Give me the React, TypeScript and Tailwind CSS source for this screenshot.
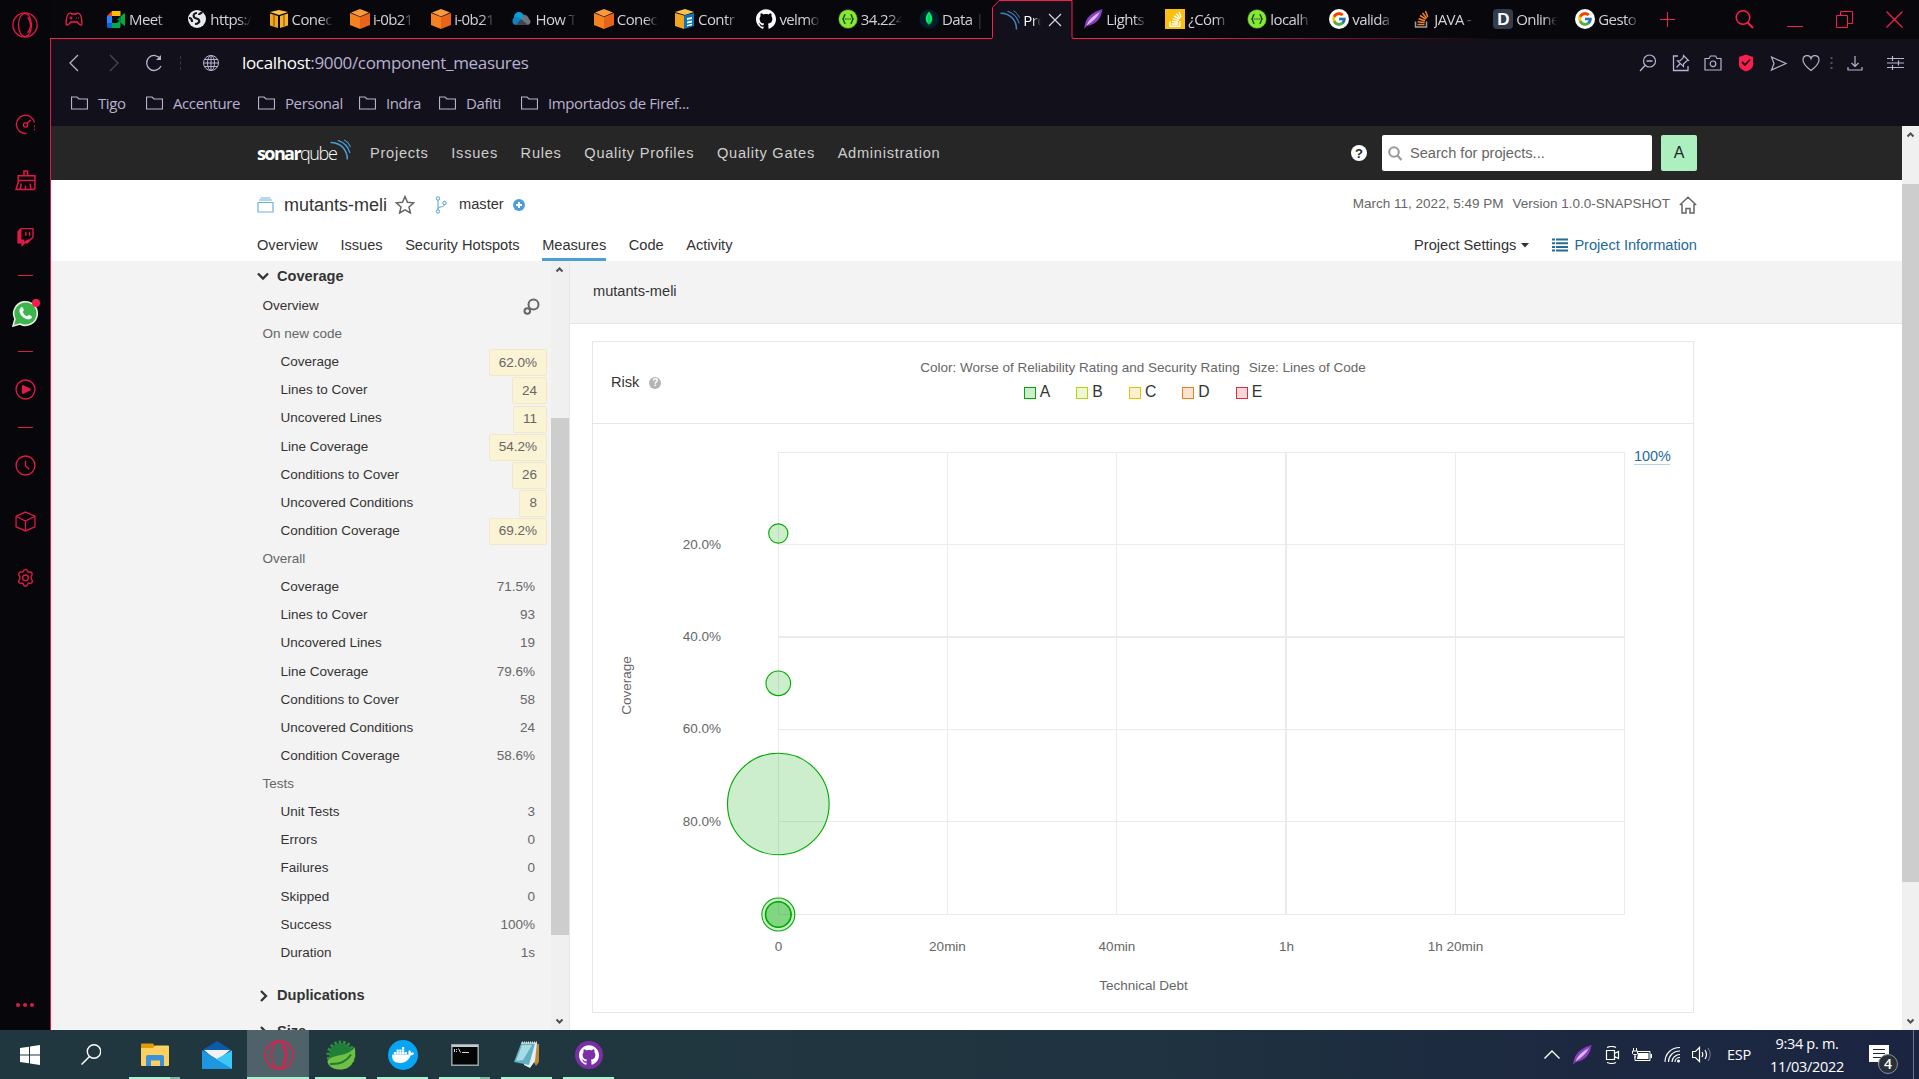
import React from "react";
import { SiTwitch, SiDocker, SiGithub } from "react-icons/si";
import { FcGoogle } from "react-icons/fc";

type Kids = { children?: React.ReactNode };

const UI = "font-['Open_Sans','Noto_Sans',sans-serif]";

function Svg({ w, h, vb, className = "", children }: Kids & { w: number; h: number; vb?: string; className?: string }) {
  return (
    <svg
      width={w}
      height={h}
      viewBox={vb ?? `0 0 ${w} ${h}`}
      fill="none"
      stroke="currentColor"
      className={`block shrink-0 ${className}`}
    >
      {children}
    </svg>
  );
}

/* ---------- favicons ---------- */

const Meet = () => (
  <Svg w={20} h={20}>
    <g stroke="none">
      <path d="M1 7l5-5v5z" fill="#ea4335" />
      <path d="M6 2h8.5v5H6z" fill="#fbbc04" />
      <path d="M1 7h5v7H1z" fill="#2684fc" />
      <path d="M1 14h5v5H2.5A1.5 1.5 0 0 1 1 17.500z" fill="#0066da" />
      <path d="M6 14h5l3.500-3v6.500a1.500 1.500 0 0 1-1.500 1.500H6z" fill="#00ac47" />
      <path d="M11 10.500l3.500-3v6z" fill="#00832d" />
      <path d="M14.500 7.500L18 4.500q1-.5 1 .5v11q0 1-1 .4l-3.500-3z" fill="#00ac47" />
    </g>
  </Svg>
);
const Globe = () => (
  <Svg w={20} h={20}>
    <circle cx="10" cy="10" r="9" fill="#e8eaed" stroke="none" />
    <path d="M10 4c-3 0-4 2-3 4s4 1 5 3-1 4-4 4M15 3c-1 2-3 1-3 3M2 9c2 0 3 2 3 4" stroke="#16151c" strokeWidth="2.200" />
  </Svg>
);
const YellowCube = () => (
  <Svg w={20} h={20}>
    <g stroke="none">
      <path d="M1 3l9-2 9 2-9 3z" fill="#fbc34a" />
      <path d="M1 4.500l8 2.500v12l-8-2.500z" fill="#f2a51e" />
      <path d="M19 4.500L11 7v12l8-2.500z" fill="#f6b02c" />
      <path d="M5 6v11M15 6v11" stroke="#7a4e06" strokeWidth="1" />
    </g>
  </Svg>
);
const OrangeCube = () => (
  <Svg w={20} h={20}>
    <g stroke="none">
      <path d="M10 0l9 3.500L10 7.500 1 3.500z" fill="#fb9a3c" />
      <path d="M0 4l10 4v12L0 16z" fill="#f58220" />
      <path d="M20 4L10 8v12l10-4z" fill="#e8641b" />
    </g>
  </Svg>
);
const CloudIcon = () => (
  <Svg w={20} h={20}>
    <g stroke="none">
      <circle cx="7" cy="8" r="5" fill="#0b9ddb" />
      <circle cx="4.500" cy="12" r="4" fill="#0b84c4" />
      <path d="M11 6a5 5 0 0 1 6 4 3.300 3.300 0 0 1-1 6H8z" fill="#6b7580" />
      <path d="M4 16h12l-7-6z" fill="#3c4650" />
    </g>
  </Svg>
);
const Console = () => (
  <Svg w={20} h={20}>
    <g stroke="none">
      <path d="M0 3l10-3 9 3-9 3z" fill="#fbc34a" />
      <path d="M0 4l9 2.500V20l-9-3z" fill="#f2a51e" />
      <path d="M9 6.500L19 4v13l-10 3z" fill="#0a75b8" />
      <path d="M12 9l5-1v2l-5 1zM12 12.500l5-1v2l-5 1zM12 16l5-1.200v1.500L12 17.500z" fill="#fff" />
    </g>
  </Svg>
);
const Swagger = () => (
  <Svg w={20} h={20}>
    <circle cx="10" cy="10" r="9.500" fill="#85ea2d" stroke="#173647" strokeWidth=".6" />
    <path d="M7.500 5.500C5 5.500 7 9.500 4.500 10 7 10.500 5 14.500 7.500 14.500M12.500 5.500c2.500 0 .5 4 3 4.500-2.500.5-.5 4.500-3 4.500" stroke="#173647" strokeWidth="1.300" />
    <path d="M7.300 10h1M9.500 10h1M11.700 10h1" stroke="#173647" strokeWidth="1.300" />
  </Svg>
);
const Mongo = () => (
  <Svg w={20} h={20}>
    <circle cx="10" cy="10" r="9.700" fill="#001e2b" stroke="none" />
    <path d="M10 2.500c2 2.500 3.300 4.500 3.300 7.200 0 2.800-1.600 4.600-3 5.600L10 17.500l-.3-2.200c-1.400-1-3-2.800-3-5.600C6.700 7 8 5 10 2.500z" fill="#00ed64" stroke="none" />
    <path d="M10 6v9" stroke="#00a84a" strokeWidth=".8" />
  </Svg>
);
const Waves = ({ w = 20, color = "#3f86bd" }: { w?: number; color?: string }) => (
  <Svg w={w} h={w} vb="0 0 20 20">
    <g stroke={color}>
      <path d="M.5 3.300C10 3.300 16.500 10 16.500 19.500" strokeWidth="1.500" />
      <path d="M7.500 1.300c5.500 1.700 10 6.500 11.500 12" strokeWidth="1.200" />
      <path d="M13.500.8c2.800 1.600 5 4.200 6 7" strokeWidth="1" />
    </g>
  </Svg>
);
const Feather = () => (
  <Svg w={20} h={20}>
    <path d="M19.500 0C12 2 4 7 2.500 13.500L1 19.500l3-2.500C13 15.500 18 10 19.500 0z" fill="#8b3fc0" stroke="none" />
    <path d="M17 3C11 6 6 10 3.500 16.500 9 13 14 9 17 3z" fill="#d9b8ee" stroke="none" />
  </Svg>
);
const Stack = ({ fg, base }: { fg: string; base: string }) => (
  <g strokeWidth="1.500">
    <path d="M4.500 12.500V18h11v-5.500" stroke={base} />
    <path d="M6.500 15.500h7M6.700 12.700l6.900.9M7.500 9.700l6.500 2.100M9 6.500l5.700 3.700M11.500 4l4.200 5.200M14.500 2l2.300 6" stroke={fg} />
  </g>
);
const StackYellow = () => (
  <Svg w={20} h={20}>
    <path d="M0 0h20v20H0z" fill="#fcbf0f" stroke="none" />
    <g transform="translate(1 1) scale(.9)">
      <Stack fg="#fff" base="#fff" />
    </g>
  </Svg>
);
const StackOrange = () => (
  <Svg w={20} h={20}>
    <Stack fg="#f48024" base="#9b9ea1" />
  </Svg>
);
const GIcon = () => (
  <span className="flex size-5 items-center justify-center rounded-full bg-white">
    <FcGoogle size={16} />
  </span>
);
const DIcon = () => (
  <span className="flex size-5 items-center justify-center rounded bg-[#333b4d] font-['Liberation_Sans',sans-serif] text-[17px] leading-none font-bold text-white">
    D
  </span>
);

type TabDef = { icon: React.ReactNode; label: string };
const tabsLeft: TabDef[] = [
  { icon: <Meet />, label: "Meet" },
  { icon: <Globe />, label: "https:/" },
  { icon: <YellowCube />, label: "Conec" },
  { icon: <OrangeCube />, label: "i-0b21" },
  { icon: <OrangeCube />, label: "i-0b21" },
  { icon: <CloudIcon />, label: "How T" },
  { icon: <OrangeCube />, label: "Conec" },
  { icon: <Console />, label: "Contr" },
  { icon: <SiGithub size={20} color="#fff" />, label: "velmo" },
  { icon: <Swagger />, label: "34.224" },
  { icon: <Mongo />, label: "Data |" },
];
const tabsRight: TabDef[] = [
  { icon: <Feather />, label: "Lights" },
  { icon: <StackYellow />, label: "¿Cóm" },
  { icon: <Swagger />, label: "localh" },
  { icon: <GIcon />, label: "valida" },
  { icon: <StackOrange />, label: "JAVA -" },
  { icon: <DIcon />, label: "Online" },
  { icon: <GIcon />, label: "Gesto" },
];

const Fade = ({ children }: Kids) => (
  <span className="w-[48px] overflow-hidden whitespace-nowrap text-[15px] leading-6 tracking-[-0.6px] text-[#d3d2d8] [mask-image:linear-gradient(90deg,#000_58%,transparent_86%)]">
    {children}
  </span>
);

function Tab({ icon, label }: TabDef) {
  return (
    <div className="flex h-[38px] w-[81.300px] shrink-0 items-center gap-[3px] pl-[7px]">
      <span className="flex size-5 shrink-0 items-center justify-center">{icon}</span>
      <Fade>{label}</Fade>
    </div>
  );
}

function TabBar() {
  return (
    <div className="relative flex h-[39px] items-start bg-[#08070c] text-[#fa1e4e]">
      <div className="absolute bottom-0 left-0 h-px w-[942px] bg-[#fa1e4e]" />
      <div className="absolute bottom-0 left-[1022px] h-px w-[430px] bg-[linear-gradient(90deg,#fa1e4e,#fa1e4e_25%,transparent)]" />
      <div className="flex h-[38px] w-[49px] shrink-0 items-center justify-center pr-[2px]">
        <Svg w={18} h={14}>
          <path d="M4 1.500Q5.500.5 7 2h4q1.500-1.500 3-.5 2.500 1 3 9.500 0 3-2.500 1.500L12 10H6l-2.500 2.500Q1 14 1 11 1.500 2.500 4 1.500z" strokeWidth="1.300" />
          <path d="M4.500 6h3M6 4.500v3M11 6h1M13 6h1" strokeWidth="1.200" />
        </Svg>
      </div>
      {tabsLeft.map((t, i) => (
        <Tab key={i} {...t} />
      ))}
      <div className="relative -ml-px flex h-[39px] w-[81px] shrink-0 items-center">
        <Svg w={82} h={39} className="absolute inset-0">
          <path d="M-.5 38.500Q.5 38.500.5 37V7.500l7-7h72.500V37q0 1.500 1.500 1.500V39H0z" fill="#12101a" stroke="none" />
          <path d="M-1 38.500Q.5 38.500.5 37V7.500l6.500-7h73V37q0 1.500 2 1.500" />
        </Svg>
        <div className="relative flex items-center pl-[8px]">
          <Waves />
          <span className="ml-[3px] w-[18px] overflow-hidden text-[15px] leading-6 tracking-[-0.6px] whitespace-nowrap text-white [mask-image:linear-gradient(90deg,#000_50%,transparent)]">
            Pro
          </span>
          <Svg w={14} h={14} className="ml-[7px] text-[#d8d5e6]">
            <path d="M1 1l12 12M13 1L1 13" strokeWidth="1.200" />
          </Svg>
        </div>
      </div>
      <div className="ml-[3px] flex">
        {tabsRight.map((t, i) => (
          <div key={i} className="w-[82px]">
            <Tab {...t} />
          </div>
        ))}
      </div>
      <div className="flex h-[38px] flex-1 items-center">
        <Svg w={15} h={15} className="ml-[10px]">
          <path d="M7.500 0v15M0 7.500h15" />
        </Svg>
        <Svg w={19} h={19} className="ml-[60px]">
          <circle cx="8" cy="7.500" r="6.800" strokeWidth="1.500" />
          <path d="M12.500 12.500L18 18" strokeWidth="2" />
        </Svg>
        <Svg w={16} h={16} className="ml-[33px]">
          <path d="M0 15.500h16" />
        </Svg>
        <Svg w={17} h={17} className="ml-[33px]">
          <path d="M.5 4.500h11v12H.5zM4.500 4.500v-4h12v12h-5" />
        </Svg>
        <Svg w={17} h={17} className="ml-[33px]">
          <path d="M.5.5l16 16M16.500.5l-16 16" strokeWidth="1.200" />
        </Svg>
      </div>
    </div>
  );
}

function AddressBar() {
  return (
    <div className="flex h-[48px] items-center pl-[18px] text-[#b9b2d0]">
      <Svg w={10} h={18}>
        <path d="M9 1L1 9l8 8" strokeWidth="1.300" />
      </Svg>
      <Svg w={10} h={18} className="ml-[30px] text-[#4a4658]">
        <path d="M1 1l8 8-8 8" strokeWidth="1.300" />
      </Svg>
      <Svg w={18} h={18} className="ml-[26px]">
        <path d="M15.500 5A7.500 7.500 0 1 0 16 12" strokeWidth="1.300" />
        <path d="M16 1v5h-5z" fill="currentColor" stroke="none" />
      </Svg>
      <div className="ml-[17px] h-[14px] w-px border-l border-dashed border-[#3a3648]" />
      <Svg w={18} h={18} className="ml-[21px]">
        <circle cx="9" cy="9" r="7.500" />
        <ellipse cx="9" cy="9" rx="3.500" ry="7.500" />
        <path d="M1.500 9h15M2.500 5.500h13M2.500 12.500h13M9 1.500v15" />
      </Svg>
      <div className="ml-[22px] text-[17px] tracking-[-0.330px] whitespace-nowrap">
        <span className="text-white">localhost</span>:9000/component_measures
      </div>
      <div className="ml-auto flex items-center pr-[15px]">
        <Svg w={18} h={18}>
          <circle cx="10.500" cy="7" r="6" strokeWidth="1.200" />
          <path d="M6 11.500L1 17M7.500 7h6" strokeWidth="1.300" />
        </Svg>
        <Svg w={18} h={18} className="ml-[15px]">
          <path d="M6 2H1.500v14.500h14.500V12" strokeWidth="1.300" />
          <path d="M11.500 1.500l5 5-2 .5-3 3 0 2.500L5.500 7l2.700-.3 3-3zM8.300 9.500L4.500 13.500" strokeWidth="1.200" />
        </Svg>
        <Svg w={18} h={18} className="ml-[14px]">
          <path d="M1 4.500h4l1.500-2.500h5L13 4.500h4V16H1z" strokeWidth="1.200" />
          <circle cx="9" cy="9.800" r="2.800" strokeWidth="1.200" />
        </Svg>
        <Svg w={16} h={18} className="ml-[16px]">
          <path d="M1 3l7-2.500L15 3v8c0 3-3 5-7 6.500C4 16 1 14 1 11z" fill="#fa1e4e" stroke="none" />
          <path d="M4 8l3 3 5-5.500" stroke="#12101a" strokeWidth="1.800" />
        </Svg>
        <Svg w={18} h={18} className="ml-[16px]">
          <path d="M1.500 3L16 9.500 1.500 16l2.500-6.500z" strokeWidth="1.200" />
        </Svg>
        <Svg w={18} h={18} className="ml-[14px]">
          <path d="M9 16.500C3 12 1 9.500 1 6c0-5 6.500-6 8-1.500C10.500 0 17 1 17 6c0 3.500-2 6-8 10.500z" strokeWidth="1.200" />
        </Svg>
        <Svg w={3} h={12} className="ml-[10px] text-[#55506a]">
          <path d="M1.500 0v12" strokeWidth="2" strokeDasharray="2 3" />
        </Svg>
        <Svg w={16} h={16} className="ml-[14px]">
          <path d="M8 1v10M4.500 8L8 11.500 11.500 8M1 12v3h14v-3" strokeWidth="1.200" />
        </Svg>
        <Svg w={17} h={16} className="ml-[24px]">
          <path d="M0 3.500h17M0 8h17M0 12.500h17M5.500 1v5M11.500 5.500v5M5.500 10v5" strokeWidth="1.200" />
        </Svg>
      </div>
    </div>
  );
}

const bookmarks = [
  ["Tigo", "w-[75px]"],
  ["Accenture", "w-[112px]"],
  ["Personal", "w-[101px]"],
  ["Indra", "w-[80px]"],
  ["Dafiti", "w-[82px]"],
  ["Importados de Firef...", "w-[180px]"],
];

function Bookmarks() {
  return (
    <div className="flex h-[39px] items-start pl-[20px] pt-[5px] text-[#b9b2d0]">
      {bookmarks.map(([label, w]) => (
        <div key={label} className={`flex shrink-0 items-center gap-[10px] ${w}`}>
          <Svg w={17} h={14}>
            <path d="M.5 12.500V1h5.500l2 2h8.500v10H.5z" strokeWidth="1.200" />
          </Svg>
          <span className="text-[15px] leading-[22px] tracking-[-0.4px] whitespace-nowrap">{label}</span>
        </div>
      ))}
    </div>
  );
}

/* ---------- browser side bar ---------- */

const Dash = () => (
  <div className="flex h-[19.500px] shrink-0 items-center">
    <div className="h-px w-[15px] bg-[#e01a46]" />
  </div>
);
const Slot = ({ children }: Kids) => (
  <div className="flex h-[56.500px] shrink-0 items-center justify-center">{children}</div>
);

const OperaMark = ({ s }: { s: number }) => (
  <Svg w={s} h={s} vb="0 0 30 30">
    <circle cx="15" cy="15" r="14" strokeWidth="1.500" />
    <ellipse cx="15" cy="15" rx="7.500" ry="13.500" strokeWidth="1.500" />
    <path d="M18 6c4.500 5 4.500 13 0 18" strokeWidth="1.500" />
  </Svg>
);

function SideBar() {
  return (
    <div className="flex w-[50px] shrink-0 flex-col items-center bg-[#07060b] text-[#e01a46]">
      <div className="flex h-[96px] shrink-0 items-start pt-[12px]">
        <OperaMark s={26} />
      </div>
      <Slot>
        <Svg w={21} h={21} vb="0 0 20 20">
          <path d="M11 18.500A8.700 8.700 0 1 1 18.500 8" strokeWidth="1.300" />
          <circle cx="10" cy="10.500" r="2" strokeWidth="1.300" />
          <path d="M11.500 9l3.500-3.500" strokeWidth="1.500" />
          <path d="M18.500 11v6" strokeDasharray="1.500 1.500" />
        </Svg>
      </Slot>
      <Slot>
        <Svg w={21} h={21} vb="0 0 20 20">
          <path d="M8.500 5.500V1h3.500v4.500M3 5.500h16V10H3zM3.500 10L1 18.500h16.500q1.500 0 1.500-2V10M6 13l-1 5M10 15v3.500M14.500 13l.5 5" strokeWidth="1.400" />
        </Svg>
      </Slot>
      <Slot>
        <SiTwitch size={19} />
      </Slot>
      <Dash />
      <div className="relative flex h-[56.500px] shrink-0 items-center justify-center">
        <Svg w={27} h={27}>
          <path d="M1 26l2-7A11.800 11.800 0 1 1 8 24z" fill="#3cb54a" stroke="#e9ece9" strokeWidth="1.600" />
          <path d="M9 7.500c1.500-1 2 0 2.800 2.500.2.800-1.300 1.500-1 2.200 1 2 2.300 3.200 4.200 4 .8.300 1.400-1.600 2.200-1.300 2.600 1.200 3.300 1.500 2.300 3-1.500 2-4.500 2-8-.5-4-3-5.500-7.500-2.500-9.900z" fill="#fff" stroke="none" />
        </Svg>
        <div className="absolute top-[14px] right-[-1px] size-2 rounded-full bg-[#fa1e4e]" />
      </div>
      <Dash />
      <Slot>
        <Svg w={21} h={21} vb="0 0 20 20">
          <circle cx="10" cy="10" r="9" strokeWidth="1.300" />
          <path d="M6.500 6.500Q7 5.500 8 6l6.500 3q1 1 0 2L8 14q-1 .5-1.500-.5z" fill="currentColor" stroke="none" />
        </Svg>
      </Slot>
      <Dash />
      <Slot>
        <Svg w={21} h={21} vb="0 0 20 20">
          <circle cx="10" cy="10" r="9" strokeWidth="1.300" />
          <path d="M10 5.500v5l3.500 3" strokeWidth="1.300" />
        </Svg>
      </Slot>
      <Slot>
        <Svg w={21} h={21} vb="0 0 20 20">
          <path d="M10 1l9 4v10l-9 4-9-4V5zM1 5l9 4.500L19 5M10 9.500V19" strokeWidth="1.200" />
        </Svg>
      </Slot>
      <Slot>
        <Svg w={21} h={21} vb="1 0 22 22">
          <path d="M12 1.500c1.500 0 2 .5 2.300 2.300l1.200.6c1.700-.6 2.500-.5 3.300.9s.5 2-.8 3.200v1.500l0 1.500c1.400 1.400 1.700 2.100.9 3.500s-1.600 1.500-3.400.9l-1.300.7c-.3 2-.8 2.400-2.200 2.400s-2-.5-2.300-2.400l-1.200-.7c-1.800.6-2.600.5-3.400-.9s-.5-2.100.9-3.400v-3c-1.400-1.300-1.600-2-.8-3.300s1.600-1.500 3.300-.9l1.200-.6c.3-1.800.8-2.300 2.300-2.300z" strokeWidth="1.400" />
          <circle cx="12" cy="10.300" r="3" strokeWidth="1.400" />
        </Svg>
      </Slot>
      <div className="mt-auto flex gap-[3px] pb-[23px]">
        <i className="size-1 rounded-full bg-[#e01a46]" />
        <i className="size-1 rounded-full bg-[#e01a46]" />
        <i className="size-1 rounded-full bg-[#e01a46]" />
      </div>
    </div>
  );
}

/* ---------- page ---------- */

const ScrollArrow = ({ down = false }: { down?: boolean }) => (
  <Svg w={17} h={17} className={`text-[#505050] ${down ? "rotate-180" : ""}`}>
    <path d="M5.500 10.500l3-3 3 3" strokeWidth="2" />
  </Svg>
);

function NavBar() {
  return (
    <div className="flex h-[54px] shrink-0 items-center bg-[#262626] pr-[205px] pl-[206px]">
      <div className="flex w-[113px] items-center whitespace-nowrap text-white">
        <span className={`${UI} text-[18px] leading-none font-bold tracking-[-1.600px]`}>sonar</span>
        <span className={`${UI} text-[18px] leading-none font-light tracking-[-1.350px]`}>qube</span>
        <div className="mb-[8px] -ml-[7px]">
          <Waves w={21} color="#4b9fd5" />
        </div>
      </div>
      <div className="flex gap-[22.700px] pt-px text-[14.625px] tracking-[0.730px] text-[#cfcfcf]">
        {["Projects", "Issues", "Rules", "Quality Profiles", "Quality Gates", "Administration"].map((t) => (
          <span key={t} className="whitespace-nowrap">
            {t}
          </span>
        ))}
      </div>
      <div className="ml-auto flex items-center">
        <span className="flex size-4 items-center justify-center rounded-full bg-white text-[13px] leading-none font-bold text-[#262626]">
          ?
        </span>
        <div className="ml-[15px] flex h-[36px] w-[270px] items-center rounded-[2px] bg-white pl-[6px] text-[14.625px] text-[#666]">
          <Svg w={14} h={15} className="text-[#999]">
            <circle cx="6" cy="6" r="4.800" strokeWidth="2" />
            <path d="M9.500 9.500L13.500 14" strokeWidth="2.200" />
          </Svg>
          <span className="ml-[8px] pt-px">Search for projects...</span>
        </div>
        <span className="ml-[9px] flex size-9 items-center justify-center rounded-[2px] bg-[#adf0bf] text-[16px] text-[#262626]">
          A
        </span>
      </div>
    </div>
  );
}

function ProjectHeader() {
  return (
    <div className="flex h-[81px] shrink-0 justify-between bg-white pr-[205px] pl-[206px] text-[14.625px] text-[#333]">
      <div className="flex flex-col justify-between">
        <div className="flex h-[49px] items-center">
          <Svg w={17} h={16} className="text-[#6cb2e2]">
            <path d="M1 5.500h15V15H1zM2 3h13M3.500 1h10" strokeWidth="1.200" />
          </Svg>
          <span className="ml-[10px] pt-px text-[18px]">mutants-meli</span>
          <Svg w={20} h={19} className="ml-[8px] text-[#666]">
            <path d="M10 1.500l2.500 5.700 6.200.6-4.700 4.100 1.400 6.100L10 14.800 4.600 18 6 11.900 1.300 7.800l6.200-.6z" strokeWidth="1.500" />
          </Svg>
          <Svg w={12} h={18} className="ml-[20px] text-[#4b9fd5]">
            <circle cx="3" cy="2.500" r="1.700" />
            <circle cx="3" cy="15.500" r="1.700" />
            <circle cx="9.500" cy="7" r="1.700" />
            <path d="M3 4.200v9.500M9.500 8.700c0 2.500-6 1.800-6.500 4" />
          </Svg>
          <span className="ml-[12px] pt-px">master</span>
          <Svg w={12} h={12} className="ml-[9px]">
            <circle cx="6" cy="6" r="6" fill="#4b9fd5" stroke="none" />
            <path d="M6 3v6M3 6h6" stroke="#fff" strokeWidth="1.800" />
          </Svg>
        </div>
        <div className="flex gap-[22.500px]">
          {["Overview", "Issues", "Security Hotspots", "Measures", "Code", "Activity"].map((t) => (
            <span
              key={t}
              className={`h-[27px] border-b-[3px] pt-[3px] leading-[16px] whitespace-nowrap ${
                t === "Measures" ? "border-[#4b9fd5]" : "border-transparent"
              }`}
            >
              {t}
            </span>
          ))}
        </div>
      </div>
      <div className="flex flex-col items-end justify-between">
        <div className="flex h-[49px] items-center text-[13.500px] text-[#666]">
          <span className="pb-px">March 11, 2022, 5:49 PM</span>
          <span className="ml-[9px] pb-px">Version 1.0.0-SNAPSHOT</span>
          <Svg w={18} h={18} className="ml-[9px]">
            <path d="M.8 9L9 1.200 17.200 9M3 8v9h4v-4.500h4V17h4V8" strokeWidth="1.500" />
          </Svg>
        </div>
        <div className="flex h-[27px] items-start pt-[3px] leading-[16px]">
          <span>Project Settings</span>
          <Svg w={8} h={5} className="mt-[6px] ml-[5px]">
            <path d="M0 0h8L4 4.500z" fill="#333" stroke="none" />
          </Svg>
          <Svg w={16} h={14} className="mt-[1px] ml-[23px] text-[#236a97]">
            <path d="M0 1.500h3M4 1.500h12M0 5.200h3M4 5.200h12M0 8.900h3M4 8.900h12M0 12.500h3M4 12.500h12" strokeWidth="2" />
          </Svg>
          <span className="ml-[6px] text-[#236a97]">Project Information</span>
        </div>
      </div>
    </div>
  );
}

type Row = { kind: "title" | "new" | "all"; label: string; value?: string };
const rows: Row[] = [
  { kind: "title", label: "On new code" },
  { kind: "new", label: "Coverage", value: "62.0%" },
  { kind: "new", label: "Lines to Cover", value: "24" },
  { kind: "new", label: "Uncovered Lines", value: "11" },
  { kind: "new", label: "Line Coverage", value: "54.2%" },
  { kind: "new", label: "Conditions to Cover", value: "26" },
  { kind: "new", label: "Uncovered Conditions", value: "8" },
  { kind: "new", label: "Condition Coverage", value: "69.2%" },
  { kind: "title", label: "Overall" },
  { kind: "all", label: "Coverage", value: "71.5%" },
  { kind: "all", label: "Lines to Cover", value: "93" },
  { kind: "all", label: "Uncovered Lines", value: "19" },
  { kind: "all", label: "Line Coverage", value: "79.6%" },
  { kind: "all", label: "Conditions to Cover", value: "58" },
  { kind: "all", label: "Uncovered Conditions", value: "24" },
  { kind: "all", label: "Condition Coverage", value: "58.6%" },
  { kind: "title", label: "Tests" },
  { kind: "all", label: "Unit Tests", value: "3" },
  { kind: "all", label: "Errors", value: "0" },
  { kind: "all", label: "Failures", value: "0" },
  { kind: "all", label: "Skipped", value: "0" },
  { kind: "all", label: "Success", value: "100%" },
  { kind: "all", label: "Duration", value: "1s" },
];

function MeasureRow({ kind, label, value }: Row) {
  if (kind === "title") {
    return <div className="flex h-[28.125px] shrink-0 items-center pl-[5.500px] text-[#666]">{label}</div>;
  }
  return (
    <div
      className={`flex h-[28.125px] shrink-0 items-center justify-between pl-[23.500px] ${
        kind === "new" ? "pr-[4px]" : "pr-[16px]"
      }`}
    >
      <span className="text-[#333]">{label}</span>
      {kind === "new" ? (
        <span className="mt-px flex h-[27px] items-center rounded-[2px] border border-[#f1e8cb] bg-[#faf3d4] px-[9px] text-[#666]">
          {value}
        </span>
      ) : (
        <span className="text-[#666]">{value}</span>
      )}
    </div>
  );
}

function Facets() {
  return (
    <div className="flex w-[519px] shrink-0 border-r border-[#e6e6e6] bg-[#f3f3f3]">
      <div className="flex w-[500px] flex-col overflow-hidden pl-[206px] text-[13.500px]">
        <div className="flex h-[31px] shrink-0 items-center text-[14.625px] font-bold text-[#333]">
          <Svg w={12} h={9}>
            <path d="M1 1.500l5 5 5-5" strokeWidth="2.300" />
          </Svg>
          <span className="ml-[8px]">Coverage</span>
        </div>
        <div className="flex h-[28.125px] shrink-0 items-center justify-between pr-[11px] pl-[5.500px]">
          <span className="text-[#333]">Overview</span>
          <Svg w={17} h={17} className="text-[#666]">
            <circle cx="10.500" cy="6.500" r="5" strokeWidth="2" />
            <circle cx="4.300" cy="13" r="2.800" strokeWidth="2" />
          </Svg>
        </div>
        {rows.map((r, i) => (
          <MeasureRow key={i} {...r} />
        ))}
        <div className="mt-[11px] flex h-[36px] shrink-0 items-center text-[14.625px] font-bold text-[#333]">
          <Svg w={8} h={12} className="ml-[3px]">
            <path d="M1 1l5 5-5 5" strokeWidth="2.300" />
          </Svg>
          <span className="ml-[9px]">Duplications</span>
        </div>
        <div className="flex h-[36px] shrink-0 items-center text-[14.625px] font-bold text-[#333]">
          <Svg w={8} h={12} className="ml-[3px]">
            <path d="M1 1l5 5-5 5" strokeWidth="2.300" />
          </Svg>
          <span className="ml-[9px]">Size</span>
        </div>
      </div>
      <div className="flex w-[18px] flex-col bg-[#f0f0f0]">
        <ScrollArrow />
        <div className="mt-[140px] h-[517px] bg-[#cdcdcd]" />
        <div className="mt-auto">
          <ScrollArrow down />
        </div>
      </div>
    </div>
  );
}

const ratings = [
  ["A", "border-[#00aa00] bg-[#cceecc]"],
  ["B", "border-[#b0d513] bg-[#eff7d0]"],
  ["C", "border-[#eabe06] bg-[#fbf2cd]"],
  ["D", "border-[#ed7d20] bg-[#fbe5d2]"],
  ["E", "border-[#d4333f] bg-[#f6d6d9]"],
];

const vLines = [778.5, 947.5, 1116.5, 1455.5, 1624.5];
const hLines = [452.5, 544.5, 729.5, 821.5, 914.5];

function BubbleChart() {
  return (
    <svg width={1099} height={588} viewBox="593 424 1099 588" className="block">
      <g stroke="#ebebeb" strokeWidth="1">
        {vLines.map((x) => (
          <path key={x} d={`M${x} 452V914`} />
        ))}
        <path d="M1286 452V914" strokeWidth="2" />
        {hLines.map((y) => (
          <path key={y} d={`M778 ${y}H1624.500`} />
        ))}
        <path d="M778 637H1624.500" strokeWidth="2" />
      </g>
      <g fill="#00aa00" fillOpacity=".2" stroke="#00aa00" strokeWidth="1.125">
        <circle cx="778.300" cy="533.500" r="9.600" />
        <circle cx="778.300" cy="683.300" r="12.300" />
        <circle cx="778.300" cy="804" r="50.800" />
        <circle cx="778.300" cy="914.500" r="16.500" />
        <circle cx="778.300" cy="914.500" r="13" />
        <circle cx="778.300" cy="914.500" r="12.500" />
      </g>
      <g fill="#666" fontSize="13.500">
        <g textAnchor="end">
          <text x="721" y="549">20.0%</text>
          <text x="721" y="641">40.0%</text>
          <text x="721" y="733">60.0%</text>
          <text x="721" y="826">80.0%</text>
        </g>
        <g textAnchor="middle">
          <text x="778.500" y="951">0</text>
          <text x="947.500" y="951">20min</text>
          <text x="1117" y="951">40min</text>
          <text x="1286.500" y="951">1h</text>
          <text x="1455.500" y="951">1h 20min</text>
          <text x="1143.500" y="990">Technical Debt</text>
          <text transform="translate(631 685.500) rotate(-90)">Coverage</text>
        </g>
        <text x="1634" y="461" fontSize="14.400" fill="#236a97">
          100%
        </text>
        <path d="M1634 464.500h36" stroke="#b7d3e6" />
      </g>
    </svg>
  );
}

function MeasuresContent() {
  return (
    <div className="flex flex-1 flex-col bg-white">
      <div className="flex h-[63px] shrink-0 items-center border-b border-[#e6e6e6] bg-[#f3f3f3] pl-[23px] text-[14.625px] text-[#333]">
        mutants-meli
      </div>
      <div className="mt-[17px] ml-[22px] h-[672px] w-[1102px] shrink-0 border border-[#e6e6e6]">
        <div className="flex h-[82px] border-b border-[#e6e6e6]">
          <div className="flex w-[180px] items-center pl-[18px] text-[14.625px] text-[#333]">
            Risk
            <span className="ml-[10px] flex size-3 items-center justify-center rounded-full bg-[#b4b4b4] text-[10px] leading-none font-bold text-white">
              ?
            </span>
          </div>
          <div className="flex w-[740px] flex-col items-center pt-[17px] text-[13.500px] leading-[18px] text-[#666]">
            <div className="flex gap-[9px] whitespace-nowrap">
              <span>Color: Worse of Reliability Rating and Security Rating</span>
              <span>Size: Lines of Code</span>
            </div>
            <div className="mt-[6px] flex gap-[26px] text-[15.750px] text-[#333]">
              {ratings.map(([r, c]) => (
                <span key={r} className="flex items-center gap-[4px]">
                  <i className={`mt-px size-[12px] border ${c}`} />
                  {r}
                </span>
              ))}
            </div>
          </div>
        </div>
        <BubbleChart />
      </div>
    </div>
  );
}

/* ---------- task bar ---------- */

const Windows = () => (
  <Svg w={20} h={20} className="text-white">
    <path d="M0 3l9-1.300V9.500H0zM10 1.500L20 0v9.500H10zM0 10.500h9v7.800L0 17zM10 10.500h10V20l-10-1.500z" fill="currentColor" stroke="none" />
  </Svg>
);
const TaskSearch = () => (
  <Svg w={20} h={21} className="text-white">
    <circle cx="13" cy="7.500" r="6.700" strokeWidth="1.400" />
    <path d="M8.500 12.500L.5 20.500" strokeWidth="1.500" />
  </Svg>
);
const Explorer = () => (
  <Svg w={28} h={24}>
    <g stroke="none">
      <path d="M0 1.500Q0 .5 1 .5h11l2 3v4H0z" fill="#e09d05" />
      <path d="M0 5h12l2-2.500h13q1 0 1 1V22q0 1-1 1H1q-1 0-1-1z" fill="#fdd05f" />
      <path d="M5 14q0-2 2-2h14q2 0 2 2v9h-4v-5.500h-9V23H5z" fill="#3a91db" />
    </g>
  </Svg>
);
const Mail = () => (
  <Svg w={30} h={28}>
    <g stroke="none">
      <path d="M0 9.500L15 0l15 9.500v5H0z" fill="#0a5ca8" />
      <path d="M2 9h26L15 20z" fill="#f2f2f4" />
      <path d="M0 9.500L15 18l15 10H0z" fill="#1e97e0" />
      <path d="M30 9.500L13.500 18.500 30 28z" fill="#3cc8f5" />
      <path d="M0 28V9.500L30 28z" fill="#1e97e0" />
    </g>
  </Svg>
);
const Spring = () => (
  <Svg w={30} h={30}>
    <circle cx="15" cy="15" r="12" fill="#1f7f38" stroke="none" />
    <circle cx="15" cy="15" r="13" stroke="#2f8f3a" strokeWidth="3" strokeDasharray="2.500 2" />
    <path d="M28.500 7c2.500 9-1 22-13.500 22.500C6 30 1.500 25 1.500 21c5-8 20-3 27-14z" fill="#6fbf44" stroke="none" />
    <path d="M4 24c9 .5 17-3 21-9.500" stroke="#1f7a34" strokeWidth="2" />
  </Svg>
);
const Docker = () => (
  <span className="flex size-[30px] items-center justify-center rounded-full bg-[#08a5f5] text-white">
    <SiDocker size={22} />
  </span>
);
const Cmd = () => (
  <Svg w={28} h={22}>
    <path d="M.8.800h26.400v20.400H.8z" fill="#050505" stroke="#9aa3a8" strokeWidth="1.500" />
    <path d="M1 1h26v2H1z" fill="#c4cbd0" stroke="none" />
    <path d="M3.500 5v3M5.500 5v1M5.500 7v1M7.500 4.500l2 4M11 8.500h7" stroke="#d8d8d8" />
  </Svg>
);
const Notepad = () => (
  <Svg w={27} h={28}>
    <g stroke="none">
      <path d="M10 2l16 1v18l-3 4z" fill="#b98a3a" />
      <path d="M8 1.500h16L22 20l-5 7-6-3z" fill="#e8eef0" />
      <path d="M8 2.500h14L16 24 1 21z" fill="#5fb0c2" />
      <path d="M9 4h10L10 19l-7 1z" fill="#a9dbe4" />
    </g>
    <path d="M9 1.500h15" stroke="#ddd" strokeWidth="1.800" strokeDasharray="1 1" />
  </Svg>
);
const GithubDesktop = () => (
  <span className="flex size-[28px] items-center justify-center rounded-full bg-[#7b2fa5] text-white">
    <SiGithub size={20} />
  </span>
);

type AppEntry = { icon: React.ReactNode; run?: boolean; more?: boolean; active?: boolean };
const apps: AppEntry[] = [
  { icon: <Explorer />, run: true, more: true },
  { icon: <Mail /> },
  { icon: <OperaMark s={30} />, active: true },
  { icon: <Spring />, run: true },
  { icon: <Docker />, run: true },
  { icon: <Cmd />, run: true, more: true },
  { icon: <Notepad />, run: true },
  { icon: <GithubDesktop />, run: true },
];

const Tray = ({ children }: Kids) => <div className="flex w-[30px] items-center justify-center">{children}</div>;

function TaskBar() {
  return (
    <div className={`${UI} flex h-[49px] shrink-0 bg-[linear-gradient(90deg,#213740,#213740_35%,#1f3240_62%,#1c2840_82%,#1b2542)]`}>
      <div className="flex w-[60px] items-center justify-center">
        <Windows />
      </div>
      <div className="flex w-[63px] items-center justify-center pr-[2px]">
        <TaskSearch />
      </div>
      {apps.map((a, i) => (
        <div
          key={i}
          className={`relative flex w-[62px] items-center justify-center pl-px text-[#e0204c] ${a.active ? "bg-[#4f6169]" : ""}`}
        >
          {a.icon}
          {a.active && <div className="absolute right-0 bottom-0 left-0 h-[2px] bg-[#a5f3cf]" />}
          {a.run && (
            <div className="absolute right-[5px] bottom-0 left-[6px] flex h-[2px] bg-[#a5f3cf]">
              {a.more && <i className="ml-auto w-[10px] bg-[#7fb9a1]" />}
            </div>
          )}
        </div>
      ))}
      <div className="ml-auto flex text-[14.500px] text-white">
        <Tray>
          <Svg w={16} h={9}>
            <path d="M.5 8.500L8 1l7.500 7.500" strokeWidth="1.400" />
          </Svg>
        </Tray>
        <Tray>
          <Feather />
        </Tray>
        <Tray>
          <Svg w={15} h={18}>
            <path d="M1.500 4.500h8v9h-8zM9.500 7.500l4-2v7l-4-2zM2 1.500q5-2 9 0M2 16.500q5 2 9 0" strokeWidth="1.200" />
          </Svg>
        </Tray>
        <Tray>
          <Svg w={20} h={14}>
            <path d="M5 3.500h13v9H3V8" />
            <path d="M6 5h10.500v6H5zM18.500 6h1.500v4h-1.500z" fill="currentColor" stroke="none" />
            <path d="M1.500 0v3M4.500 0v3M.5 3h5v2.500l-1 1h-3l-1-1zM3 6.500V10" />
          </Svg>
        </Tray>
        <Tray>
          <Svg w={17} h={17}>
            <path d="M1 16C1 8 7 1.500 16 1.500M4.500 16C4.500 10 9 5 16 5M8 16c0-4 3.500-7.500 8-7.500M11 16c0-2.500 2-4.500 5-4.500" strokeWidth="1.100" />
            <circle cx="14.500" cy="15" r="1.500" fill="currentColor" stroke="none" />
          </Svg>
        </Tray>
        <Tray>
          <Svg w={20} h={17}>
            <path d="M.5 5.500h3l4-4v14l-4-4h-3zM10 6q1.500 2.500 0 5M13 4q3 4.500 0 9" strokeWidth="1.200" />
            <path d="M16 2q4.500 6.500 0 13" stroke="#77839a" />
          </Svg>
        </Tray>
        <div className="flex w-[44px] items-center justify-center tracking-[-0.2px]">ESP</div>
        <div className="flex w-[92px] flex-col items-center justify-center text-center leading-[23px] tracking-[-0.300px] whitespace-nowrap">
          <span>9:34 p. m.</span>
          <span>11/03/2022</span>
        </div>
        <div className="relative w-[61px] border-r border-[#6c7686]">
          <Svg w={20} h={20} className="mt-[15px] ml-[16px]">
            <path d="M0 0h20v17h-8l-3 3v-3H0z" fill="#fff" stroke="none" />
            <path d="M4 4.500h12M4 8.500h12M4 12.500h8" stroke="#1b2542" strokeWidth="1.200" />
          </Svg>
          <span className="absolute top-[24px] left-[25px] flex size-5 items-center justify-center rounded-full border border-[#8a8f98] bg-[#2b2f38] text-[14px] leading-none font-semibold">
            4
          </span>
        </div>
        <div className="w-[5px]" />
      </div>
    </div>
  );
}

export default function App() {
  return (
    <div className="flex h-[1079px] w-[1919px] flex-col overflow-hidden bg-[#07060b] font-['Liberation_Sans',Arial,sans-serif]">
      <div className="flex h-[1030px] shrink-0">
        <SideBar />
        <div className="flex w-[1869px] flex-col">
          <div className={UI}>
            <TabBar />
          </div>
          <div className="flex flex-1 flex-col border-l border-[#d81c46]">
            <div className={`${UI} h-[87px] bg-[#12101a]`}>
              <AddressBar />
              <Bookmarks />
            </div>
            <div className="flex h-[904px]">
              <div className="flex w-[1851px] flex-col">
                <NavBar />
                <ProjectHeader />
                <div className="flex h-[769px] overflow-hidden">
                  <Facets />
                  <MeasuresContent />
                </div>
              </div>
              <div className="flex w-[17px] flex-col bg-[#f0f0f0]">
                <ScrollArrow />
                <div className="mt-[41px] h-[698px] bg-[#cdcdcd]" />
                <div className="mt-auto">
                  <ScrollArrow down />
                </div>
              </div>
            </div>
          </div>
        </div>
      </div>
      <TaskBar />
    </div>
  );
}
